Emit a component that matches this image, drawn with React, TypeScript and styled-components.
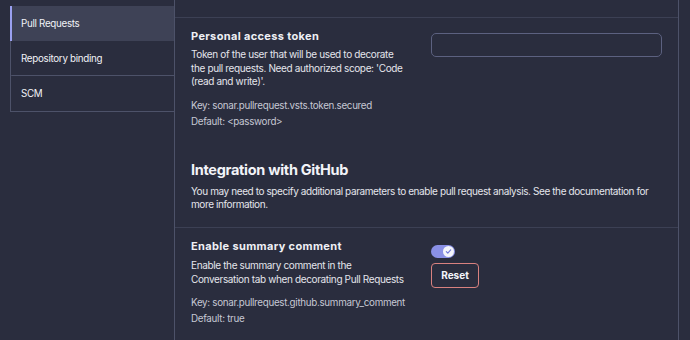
import React from 'react';
import styled, { createGlobalStyle } from 'styled-components';

const GlobalStyle = createGlobalStyle`
  html, body {
    margin: 0;
    padding: 0;
    background: #2a2d3e;
  }
  body {
    font-family: Inter, "Noto Sans", sans-serif;
    color: #e6e7ee;
  }
`;

const Page = styled.div`
  display: flex;
  width: 690px;
  height: 340px;
  overflow: hidden;
  background: #2a2d3e;
`;

const SidebarWrap = styled.div`
  width: 164px;
  padding-left: 10px;
  padding-top: 6px;
`;

const Nav = styled.nav`
  border-left: 1px solid #4d5269;
  border-bottom: 1px solid #4d5269;
`;

const NavItem = styled.div<{ $active?: boolean; $last?: boolean }>`
  height: 35px;
  display: flex;
  align-items: center;
  padding-left: 9px;
  font-size: 9.8px;
  letter-spacing: -0.3px;
  color: #f1f2f7;
  box-sizing: border-box;
  background: ${p => (p.$active ? '#3e4256' : 'transparent')};
  border-left: 2px solid ${p => (p.$active ? '#9aa0f0' : 'transparent')};
  margin-left: -1px;
  border-bottom: ${p => (p.$active || p.$last ? 'none' : '1px solid #4d5269')};
`;

const Main = styled.main`
  width: 503px;
  border-left: 1px solid #4d5269;
  border-right: 1px solid #4d5269;
`;

const Section = styled.section<{ $height?: number; $last?: boolean }>`
  padding: 0 16px;
  border-bottom: ${p => (p.$last ? 'none' : '1px solid #3c4054')};
  ${p => (p.$height !== undefined ? `height: ${p.$height}px;` : '')}
`;

const Setting = styled.div<{ $top: number }>`
  display: flex;
  gap: 22px;
  padding-top: ${p => p.$top}px;
`;

const SettingText = styled.div`
  width: 218px;
`;

const Title = styled.h3<{ $gap: number }>`
  margin: 0 0 ${p => p.$gap}px;
  font-size: 11px;
  letter-spacing: 0.35px;
  font-weight: 700;
  line-height: 16px;
  color: #eff0f5;
`;

const Desc = styled.p<{ $lh: number; $gap: number }>`
  margin: 0 0 ${p => p.$gap}px;
  font-size: 10px;
  letter-spacing: -0.36px;
  line-height: ${p => p.$lh}px;
  color: #e4e5ec;
`;

const Meta = styled.div`
  font-size: 9.8px;
  letter-spacing: -0.3px;
  line-height: 16px;
  color: #c6c8d4;
`;

const Controls = styled.div<{ $top: number }>`
  display: flex;
  flex-direction: column;
  align-items: flex-start;
  gap: 5px;
  padding-top: ${p => p.$top}px;
`;

const TextInput = styled.input`
  width: 231px;
  height: 24px;
  box-sizing: border-box;
  background: #2a2d3e;
  border: 1px solid #5c6180;
  border-radius: 5px;
  outline: none;
`;

const IntroBlock = styled.div`
  padding-top: 30px;
  padding-bottom: 16px;
`;

const Heading = styled.h2`
  margin: 0 0 5px;
  font-size: 14.5px;
  letter-spacing: -0.3px;
  font-weight: 700;
  line-height: 20px;
  color: #f2f3f8;
`;

const Intro = styled.p`
  margin: 0;
  font-size: 10px;
  letter-spacing: -0.4px;
  line-height: 13px;
  color: #e4e5ec;
`;

const Toggle = styled.div`
  width: 24px;
  height: 13px;
  border-radius: 7px;
  background: #8a90e6;
  display: flex;
  justify-content: flex-end;
  align-items: center;
  padding: 1px;
  box-sizing: border-box;
`;

const Knob = styled.div`
  width: 11px;
  height: 11px;
  border-radius: 50%;
  background: #f4f5fb;
  display: flex;
  align-items: center;
  justify-content: center;
`;

const ResetButton = styled.button`
  width: 48px;
  height: 25px;
  border: 1px solid #d9817f;
  border-radius: 4px;
  background: transparent;
  color: #f4f5fb;
  font-family: Inter, sans-serif;
  font-size: 10px;
  font-weight: 700;
  padding: 0;
`;

export default function App() {
  return (
    <>
      <GlobalStyle />
      <Page>
        <SidebarWrap>
          <Nav>
            <NavItem $active>Pull Requests</NavItem>
            <NavItem>Repository binding</NavItem>
            <NavItem $last>SCM</NavItem>
          </Nav>
        </SidebarWrap>
        <Main>
          <Section $height={17} />
          <Section>
            <Setting $top={10}>
              <SettingText>
                <Title $gap={4}>Personal access token</Title>
                <Desc $lh={13.5} $gap={9}>
                  Token of the user that will be used to decorate the pull requests. Need authorized
                  scope: 'Code (read and write)'.
                </Desc>
                <Meta>Key: sonar.pullrequest.vsts.token.secured</Meta>
                <Meta>Default: &lt;password&gt;</Meta>
              </SettingText>
              <Controls $top={5}>
                <TextInput type="password" />
              </Controls>
            </Setting>
            <IntroBlock>
              <Heading>Integration with GitHub</Heading>
              <Intro>
                You may need to specify additional parameters to enable pull request analysis. See
                the documentation for more information.
              </Intro>
            </IntroBlock>
          </Section>
          <Section $last>
            <Setting $top={10}>
              <SettingText>
                <Title $gap={4}>Enable summary comment</Title>
                <Desc $lh={14} $gap={9}>
                  Enable the summary comment in the Conversation tab when decorating Pull Requests
                </Desc>
                <Meta>Key: sonar.pullrequest.github.summary_comment</Meta>
                <Meta>Default: true</Meta>
              </SettingText>
              <Controls $top={7}>
                <Toggle>
                  <Knob>
                    <svg width="7" height="7" viewBox="0 0 8 8">
                      <path d="M1.5 4.2 L3.2 5.8 L6.5 2.2" fill="none" stroke="#6f77d9" strokeWidth="1.3" strokeLinecap="round" strokeLinejoin="round" />
                    </svg>
                  </Knob>
                </Toggle>
                <ResetButton>Reset</ResetButton>
              </Controls>
            </Setting>
          </Section>
        </Main>
      </Page>
    </>
  );
}
